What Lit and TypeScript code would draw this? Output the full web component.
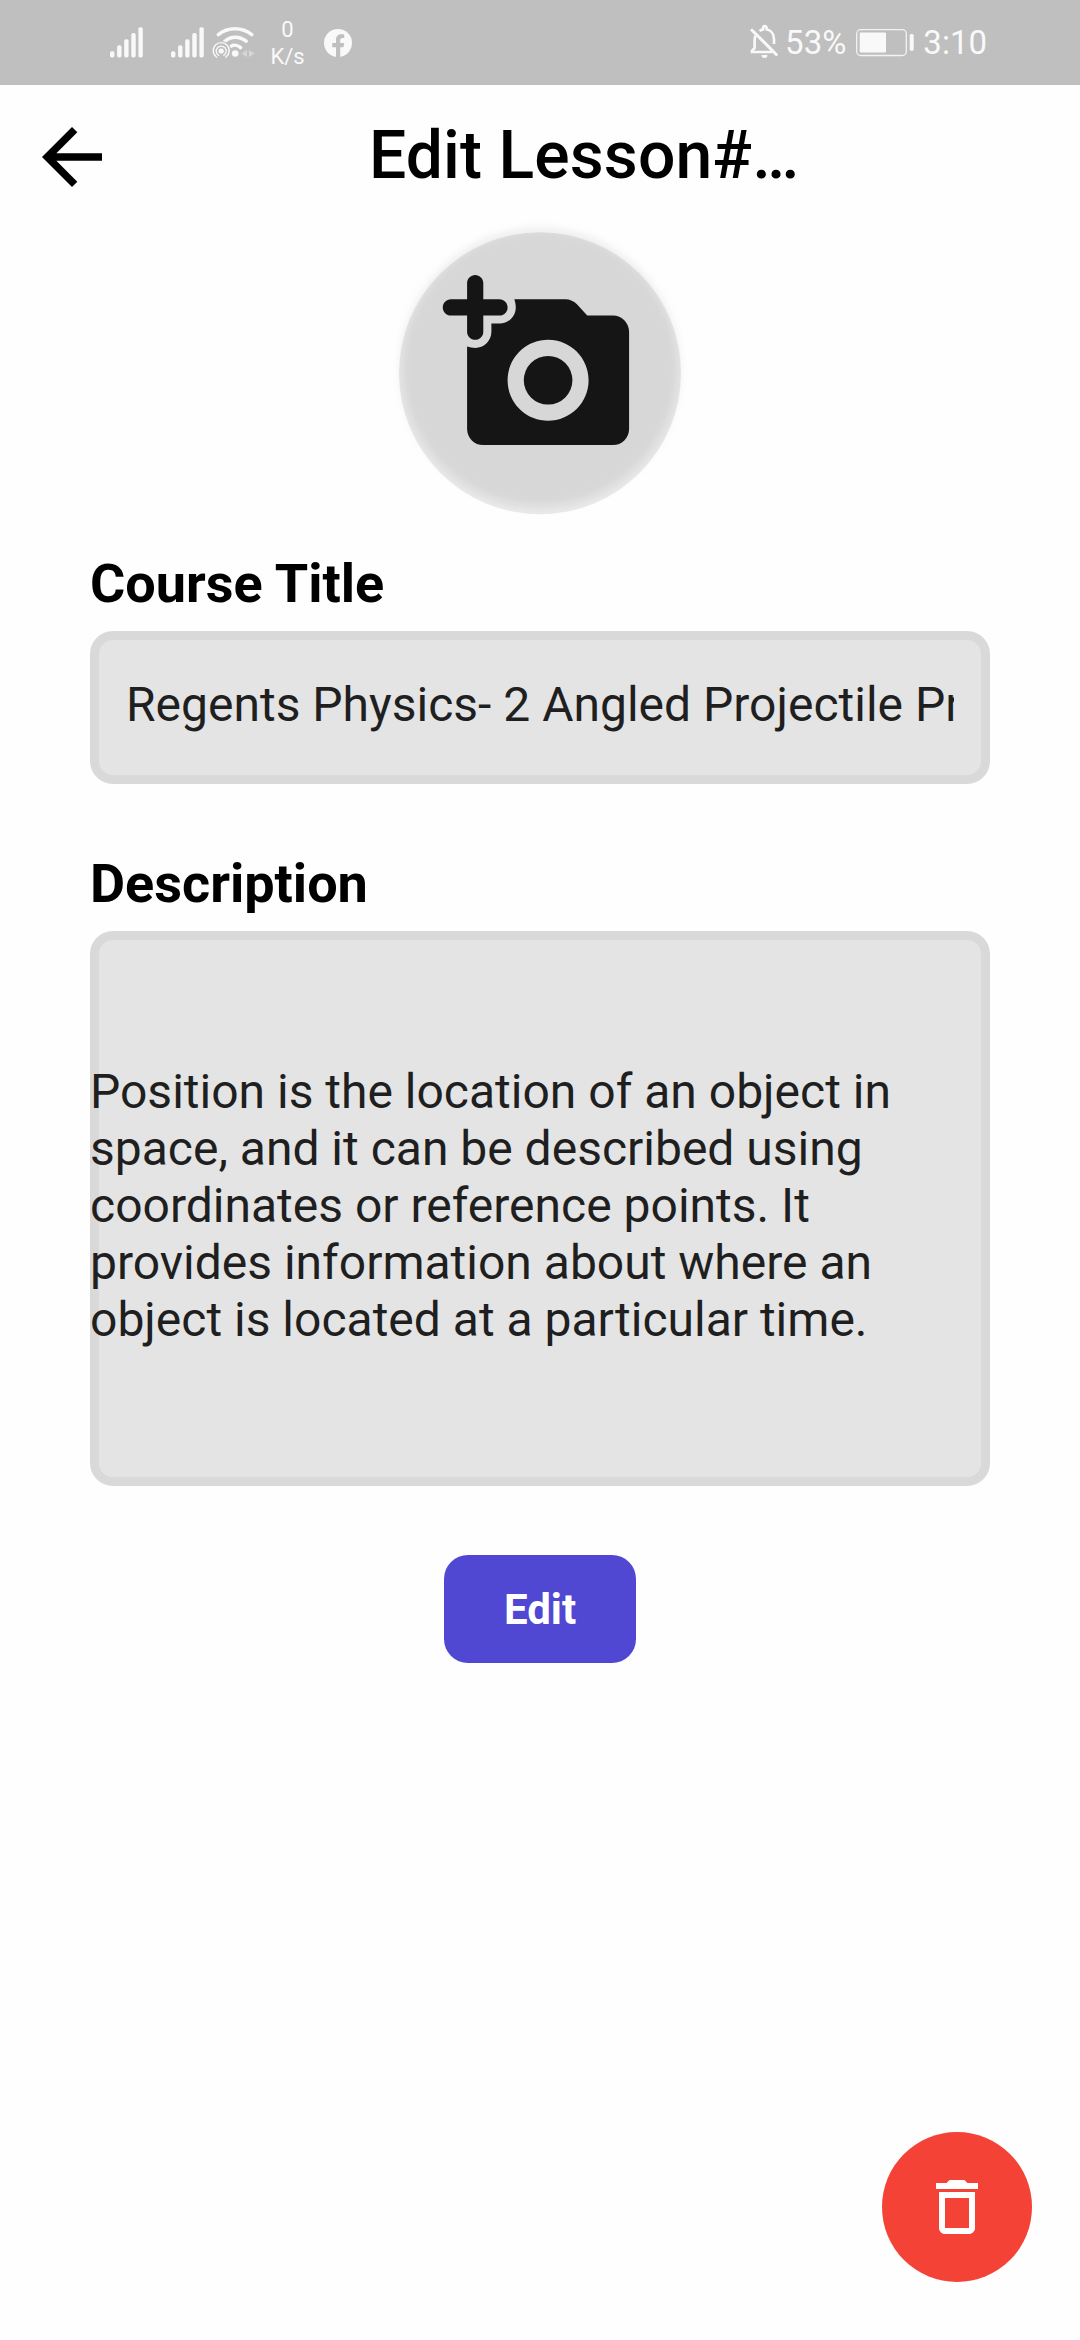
import { LitElement, html, css, svg } from "lit";
import { customElement, property } from "lit/decorators.js";

@customElement("signal-bars")
class SignalBars extends LitElement {
  static styles = css`
    :host { display: block; width: 34px; height: 31px; }
    svg { display: block; }
  `;
  render() {
    const heights = [6.2, 12.2, 18.3, 24.5, 30.3];
    return html`<svg width="34" height="31" viewBox="0 0 34 31" fill="#f9f9f9">
      ${heights.map((h, i) => svg`<rect x=${i * 7.1} y=${30.5 - h} width="4.4" height=${h} rx="1.8"></rect>`)}
    </svg>`;
  }
}

@customElement("status-bar")
class StatusBar extends LitElement {
  static styles = css`
    :host {
      display: flex; align-items: flex-start; box-sizing: border-box;
      height: 85px; padding: 0 93px 0 109.5px; background: #bfbfbf; color: #f9f9f9;
      font-family: Roboto, sans-serif;
    }
    svg { display: block; flex: none; }
    .bars { margin-top: 26.5px; }
    .second { margin-left: 27px; }
    .wifi { margin: 24px 0 0 6px; }
    .rate { width: 46px; margin: 16px 0 0 10px; font-size: 22px; line-height: 27px; text-align: center; }
    .fb { margin: 29px 0 0 13.5px; }
    .grow { flex: 1; }
    .bell { margin: 24px 5.5px 0 0; }
    .num { font-size: 33px; line-height: 40px; margin-top: 23px; white-space: nowrap; }
    .battery { margin: 29px 9px 0 10px; }
  `;
  render() {
    return html`
      <signal-bars class="bars"></signal-bars>
      <signal-bars class="bars second"></signal-bars>
      <svg class="wifi" width="44" height="36" viewBox="0 0 44 36" fill="none" stroke="#f9f9f9" stroke-linecap="round">
        <g stroke-width="3.5">
          <path d="M7.3 10.7C17 2.8 31 2.8 40.8 10.7"></path>
          <path d="M13.8 17.2C20 11.8 28.4 11.8 35.2 17.2"></path>
          <path d="M20 22.2c3-1.7 7-1 9.6 1.4"></path>
        </g>
        <circle cx="24.2" cy="29.5" r="3.3" fill="#f9f9f9" stroke="none"></circle>
        <circle cx="10.2" cy="27" r="10" fill="#bfbfbf" stroke="none"></circle>
        <circle cx="10.2" cy="27" r="2.6" fill="#f9f9f9" stroke="none"></circle>
        <path d="M7.6 31.4a5 5 0 1 1 5.2 0" stroke-width="1.3"></path>
        <path d="M5.6 33.2a8 8 0 1 1 9.2 0" stroke-width="1.4"></path>
        <path d="M36 26v7l-5.5-3.5zM38 26l5.5 3.5-5.5 3.5z" fill="#d6d6d6" stroke="none"></path>
      </svg>
      <div class="rate"><div>0</div><div>K/s</div></div>
      <svg class="fb" width="28" height="29" viewBox="0 0 28 29">
        <circle cx="14" cy="14" r="14" fill="#f9f9f9"></circle>
        <path d="M12 28.3V18.2H8.2V14H12v-3.3c0-3.6 2.1-5.5 5.3-5.5 1 0 2 .1 2.9.3v3.6h-1.8c-1.7 0-2.2 1-2.2 2.1V14h4l-.7 4.2h-3.3v10.1z" fill="#bfbfbf"></path>
      </svg>
      <div class="grow"></div>
      <svg class="bell" width="30" height="36" viewBox="0 0 30 36" fill="none" stroke="#f9f9f9">
        <path d="M5.5 11.5C4.8 13 4.6 14.5 4.6 16.5V24L2 26.7V28h20M9.5 7c1.2-1 2.4-1.5 3.5-1.7V4a1.8 1.8 0 0 1 3.6 0v1.3c4.6 1 7.4 5 7.4 10V20" stroke-width="2.7"></path>
        <path d="M2 6.2L26.3 30.5" stroke-width="3" stroke-linecap="round"></path>
        <path d="M11.5 31h6a3 3 0 0 1-6 0z" fill="#f9f9f9" stroke="none"></path>
      </svg>
      <div class="num">53%</div>
      <svg class="battery" width="58" height="28" viewBox="0 0 58 28" fill="#f9f9f9">
        <rect x=".7" y=".7" width="49.6" height="25.8" rx="4" fill="none" stroke="#f3f3f3" stroke-width="1.3"></rect>
        <rect x="3.7" y="3.4" width="26.3" height="20.2" rx="1"></rect>
        <rect x="53.7" y="5" width="4" height="16.7" rx="1.5"></rect>
      </svg>
      <div class="num">3:10</div>
    `;
  }
}

@customElement("form-field")
class FormField extends LitElement {
  @property() label = "";
  @property() value = "";
  @property({ type: Boolean, reflect: true }) multiline = false;

  static styles = css`
    :host { display: block; font-family: Roboto, sans-serif; }
    .label { font-size: 54px; line-height: 66px; font-weight: 700; color: #000; white-space: nowrap; }
    .box {
      display: flex; align-items: center; box-sizing: border-box; height: 153px; margin-top: 14px;
      border: 9px solid #d9d9d9; border-radius: 23px; background: #e4e4e4; padding: 0 27px;
    }
    .text {
      flex: 1; min-width: 0; overflow: hidden; white-space: nowrap; color: #1f1f1f;
      font-size: 48px; line-height: 57px; margin-top: -6px;
    }
    :host([multiline]) .box { height: 555px; padding: 0; }
    :host([multiline]) .text { margin: -7px -9px 0; overflow: visible; white-space: pre-line; }
  `;
  render() {
    return html`<div class="label">${this.label}</div>
      <div class="box"><div class="text">${this.value}</div></div>`;
  }
}

@customElement("app-root")
class AppRoot extends LitElement {
  static styles = css`
    :host {
      display: flex; flex-direction: column; box-sizing: border-box; height: 2340px; width: 1080px;
      background: #fefefe; font-family: Roboto, sans-serif; overflow: hidden;
    }
    svg { display: block; }
    .header { display: flex; align-items: center; height: 141px; padding-left: 27px; }
    .back { margin-top: 2px; }
    .title { margin-left: 252px; width: 434px; font-size: 66px; line-height: 78px; font-weight: 500; letter-spacing: 0.1px; white-space: nowrap; color: #000; }
    .photo { display: flex; justify-content: center; height: 322px; }
    .form { display: flex; flex-direction: column; gap: 67px; padding: 3px 90px 0; }
    .edit {
      align-self: center; display: flex; align-items: center; justify-content: center; box-sizing: border-box;
      width: 192px; height: 108px; margin-top: 69px; border: 0; border-radius: 24px; padding: 2px 0 0;
      background: #5048d2; color: #fff; font: 700 42px/50px Roboto, sans-serif;
    }
    .fab {
      display: flex; align-items: center; justify-content: center; align-self: flex-end;
      width: 150px; height: 150px; margin: auto 48px 58px 0; border: 0; padding: 0;
      border-radius: 50%; background: #f44336;
    }
  `;

  render() {
    return html`
      <status-bar></status-bar>
      <div class="header">
        <svg class="back" width="90" height="90" viewBox="0 0 24 24">
          <path d="M20 11H7.83l5.59-5.59L12 4l-8 8 8 8 1.41-1.41L7.83 13H20v-2z"></path>
        </svg>
        <div class="title">Edit Lesson#…</div>
      </div>
      <div class="photo">
        <svg width="320" height="322" viewBox="380 226 320 322" overflow="visible">
          <defs>
            <filter id="soft" x="-15%" y="-15%" width="130%" height="130%" color-interpolation-filters="sRGB">
              <feGaussianBlur stdDeviation="5"></feGaussianBlur>
            </filter>
          </defs>
          <circle cx="540" cy="368" r="139" fill="#eaeaea" filter="url(#soft)"></circle>
          <circle cx="540" cy="373.2" r="141" fill="#000" fill-opacity=".08"></circle>
          <g transform="translate(442.8 266.9) scale(8.1)" fill="#151515">
            <path d="M3 8c0 .55.45 1 1 1s1-.45 1-1V6h2c.55 0 1-.45 1-1s-.45-1-1-1H5V2c0-.55-.45-1-1-1s-1 .45-1 1v2H1c-.55 0-1 .45-1 1s.45 1 1 1h2v2z"></path>
            <circle cx="13" cy="14" r="3"></circle>
            <path d="M21 6h-3.17l-1.24-1.35c-.37-.41-.91-.65-1.47-.65H8.83c.11.31.18.65.18 1 0 1.1-.9 2-2 2H6v1c0 1.1-.9 2-2 2-.35 0-.69-.07-1-.18V20c0 1.1.9 2 2 2h16c1.1 0 2-.9 2-2V8c0-1.1-.9-2-2-2zm-8 13c-2.76 0-5-2.24-5-5s2.24-5 5-5 5 2.24 5 5-2.24 5-5 5z"></path>
          </g>
        </svg>
      </div>
      <div class="form">
        <form-field label="Course Title" value="Regents Physics- 2 Angled Projectile Problem"></form-field>
        <form-field multiline label="Description" .value=${[
          "Position is the location of an object in",
          "space, and it can be described using",
          "coordinates or reference points. It",
          "provides information about where an",
          "object is located at a particular time.",
        ].join("\n")}></form-field>
      </div>
      <button class="edit">Edit</button>
      <button class="fab" aria-label="Delete">
        <svg width="72" height="72" viewBox="0 0 24 24" fill="#fff">
          <path fill-rule="evenodd" d="M6 19c0 1.1.9 2 2 2h8c1.1 0 2-.9 2-2V7H6v12zM8 9h8v10H8V9zM15.5 4l-1-1h-5l-1 1H5v2h14V4h-3.5z"></path>
        </svg>
      </button>
    `;
  }
}
